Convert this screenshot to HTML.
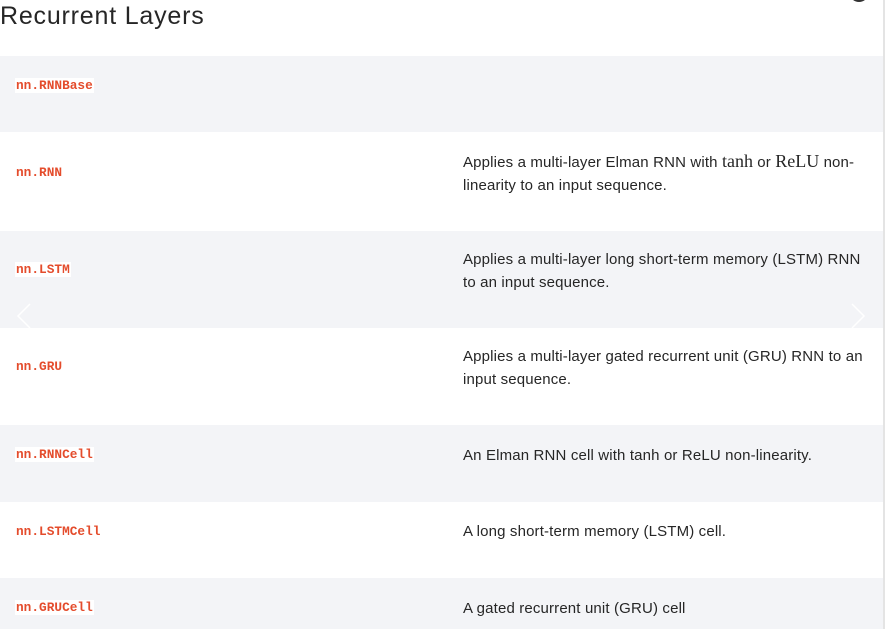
<!DOCTYPE html>
<html><head><style>
body{margin:0;width:885px;height:629px;overflow:hidden;background:#fff;font-family:"Liberation Sans",sans-serif;position:relative}
h1{position:absolute;left:0;top:2px;margin:0;font-weight:normal;font-size:25px;color:#262626;letter-spacing:0.8px}
.row{position:absolute;left:0;width:883px}
.g{background:#f3f4f7}
code{position:absolute;left:15px;font-family:"Liberation Mono",monospace;font-size:12.8px;color:#e44c2c;background:#fff;padding:0 1px;font-weight:bold}
.d{position:absolute;left:463px;width:414px;font-size:15px;letter-spacing:0.15px;line-height:23px;color:#262626}
.vl{position:absolute;left:883px;top:0;width:2px;height:629px;background:#e4e4e4}
.m{font-family:"Liberation Serif",serif;font-size:18px;letter-spacing:0}
</style></head><body>
<h1>Recurrent Layers</h1>
<div style="position:absolute;left:850px;top:-14px;width:18px;height:16px;border-radius:50%;background:#333"></div>
<div class="row g" style="top:56px;height:76px"><code style="top:22px">nn.RNNBase</code></div>
<div class="row" style="top:132px;height:99px"><code style="top:33px;background:none">nn.RNN</code><div class="d" style="top:18px">Applies a multi-layer Elman RNN with <span class="m">tanh</span> or <span class="m">ReLU</span> non-linearity to an input sequence.</div></div>
<div class="row g" style="top:231px;height:97px"><code style="top:31px">nn.LSTM</code><div class="d" style="top:17px">Applies a multi-layer long short-term memory (LSTM) RNN to an input sequence.</div></div>
<div class="row" style="top:328px;height:97px"><code style="top:31px;background:none">nn.GRU</code><div class="d" style="top:17px">Applies a multi-layer gated recurrent unit (GRU) RNN to an input sequence.</div></div>
<div class="row g" style="top:425px;height:77px"><code style="top:22px">nn.RNNCell</code><div class="d" style="top:19px">An Elman RNN cell with tanh or ReLU non-linearity.</div></div>
<div class="row" style="top:502px;height:76px"><code style="top:22px;background:none">nn.LSTMCell</code><div class="d" style="top:18px">A long short-term memory (LSTM) cell.</div></div>
<div class="row g" style="top:578px;height:51px"><code style="top:22px">nn.GRUCell</code><div class="d" style="top:19px">A gated recurrent unit (GRU) cell</div></div>
<svg style="position:absolute;left:14px;top:302px" width="20" height="28"><path d="M16 2 L4 14 L16 26" stroke="#fff" stroke-width="1.5" fill="none"/></svg>
<svg style="position:absolute;left:848px;top:302px" width="20" height="28"><path d="M4 2 L16 14 L4 26" stroke="#fff" stroke-width="1.5" fill="none"/></svg>
<div class="vl"></div>
</body></html>
